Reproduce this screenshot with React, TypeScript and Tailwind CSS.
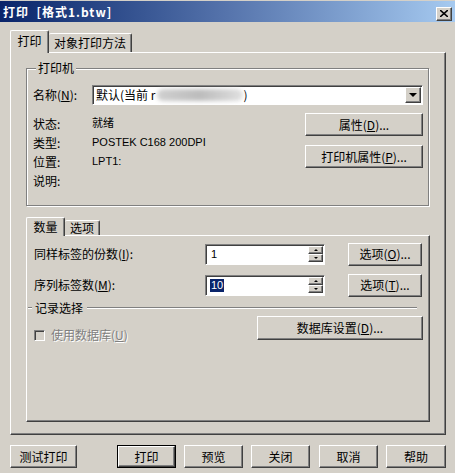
import React from "react";

const raised =
  "border border-t-white border-l-white border-r-[#404040] border-b-[#404040] shadow-[inset_-1px_-1px_0_#808080] bg-[#d4d0c8]";
const sunken =
  "border border-t-[#808080] border-l-[#808080] border-r-white border-b-white shadow-[inset_1px_1px_0_#404040] bg-white";
const cjk = "font-['SimSun','Noto_Sans_CJK_SC',sans-serif]";

const Btn = ({ label, className = "" }: { label: React.ReactNode; className?: string }) => (
  <div
    className={`${raised} flex items-center justify-center text-[12px] leading-none text-black ${className}`}
  >
    {label}
  </div>
);

const U = ({ c }: { c: string }) => <span className="underline underline-offset-1">{c}</span>;

const SpinBox = ({ value, selected }: { value: string; selected?: boolean }) => (
  <div className={`${sunken} w-[120px] h-[21px] flex items-center pl-[4px]`}>
    <span
      className={`text-[11px] leading-[13px] font-['Liberation_Sans',sans-serif] px-[1px] ${
        selected ? "bg-[#0a246a] text-white" : "text-black"
      }`}
    >
      {value}
    </span>
    <div className="ml-auto mr-[1px] flex flex-col gap-0">
      <div className={`${raised} w-[15px] h-[8px] flex items-center justify-center`}>
        <div className="w-0 h-0 border-l-[2px] border-r-[2px] border-b-[2px] border-l-transparent border-r-transparent border-b-black" />
      </div>
      <div className={`${raised} w-[15px] h-[8px] flex items-center justify-center`}>
        <div className="w-0 h-0 border-l-[2px] border-r-[2px] border-t-[2px] border-l-transparent border-r-transparent border-t-black" />
      </div>
    </div>
  </div>
);

const InfoRow = ({ label, value }: { label: string; value?: string }) => (
  <div className="h-[19px] flex items-center">
    <span className="w-[59px] text-[12px] leading-none">{label}</span>
    <span className="text-[11px] leading-none font-['Liberation_Sans','Noto_Sans_CJK_SC',sans-serif]">
      {value}
    </span>
  </div>
);

export default function App() {
  return (
    <div className={`w-[455px] h-[473px] bg-[#d4d0c8] overflow-hidden ${cjk} text-black`}>
      {/* title bar */}
      <div className="h-[21px] mt-[1px] flex items-center bg-gradient-to-r from-[#0a246a] via-[#5674ac] to-[#a6caf0] pl-[3px] pr-[3px]">
        <span className="text-white font-bold text-[12px] leading-none tracking-[1px]">
          打印&nbsp;&nbsp;[格式1.btw]
        </span>
        <div className={`${raised} ml-auto mt-[4px] w-[16px] h-[14px] flex items-center justify-center`}>
          <svg width="8" height="7" viewBox="0 0 8 7">
            <path d="M0 0 L8 7 M8 0 L0 7" stroke="black" strokeWidth="1.6" />
          </svg>
        </div>
      </div>

      {/* main tabs */}
      <div className="mt-[8px] ml-[10px] flex items-end">
        <div className="relative z-10 -mb-px h-[23px] w-[39px] border-t border-l border-r border-t-white border-l-white border-r-[#404040] shadow-[inset_-1px_0_0_#808080] rounded-t-[2px] bg-[#d4d0c8] flex items-start justify-center pt-[4px] text-[12px] leading-none">
          打印
        </div>
        <div className="h-[19px] w-[83px] border-t border-r border-t-white border-r-[#404040] shadow-[inset_-1px_0_0_#808080] rounded-t-[2px] flex items-start justify-center pt-[3px] text-[12px] leading-none">
          对象打印方法
        </div>
      </div>

      {/* main panel */}
      <div className={`${raised} ml-[10px] w-[436px] h-[383px] flex flex-col`}>
        <fieldset className="ml-[15px] mt-[7px] w-[403px] h-[146px] border border-[#808080] shadow-[inset_1px_1px_0_#fff,1px_1px_0_#fff] pl-[6px] pr-[5px] pt-[9px]">
          <legend className="ml-[3px] px-[2px] bg-[#d4d0c8] text-[12px] leading-[16px]">打印机</legend>
          <div className="flex items-center">
            <span className="w-[59px] text-[12px] leading-none">
              名称(<U c="N" />):
            </span>
            <div className={`${sunken} w-[331px] h-[20px] flex items-center pl-[3px]`}>
              <span className="text-[12px] leading-none">默认(当前 r</span>
              <span className="ml-[2px] w-[86px] h-[12px] rounded-full bg-gradient-to-r from-[#d0d0d0] via-[#bcbcbc] to-[#e0e0e0] blur-[2px]" />
              <span className="text-[12px] leading-none">)</span>
              <div className={`${raised} ml-auto mr-[1px] w-[16px] h-[16px] flex items-center justify-center`}>
                <div className="w-0 h-0 border-l-[4px] border-r-[4px] border-t-[4px] border-l-transparent border-r-transparent border-t-black" />
              </div>
            </div>
          </div>
          <div className="flex">
            <div className="pt-[9px] flex flex-col">
              <InfoRow label="状态:" value="就绪" />
              <InfoRow label="类型:" value="POSTEK C168 200DPI" />
              <InfoRow label="位置:" value="LPT1:" />
              <InfoRow label="说明:" />
            </div>
            <div className="ml-auto pt-[8px] flex flex-col gap-[9px]">
              <Btn className="w-[118px] h-[23px]" label={<>属性(<U c="D" />)...</>} />
              <Btn className="w-[118px] h-[23px]" label={<>打印机属性(<U c="P" />)...</>} />
            </div>
          </div>
        </fieldset>

        {/* inner tabs */}
        <div className="mt-[11px] ml-[15px] flex items-end">
          <div className="relative z-10 -mb-px h-[19px] w-[39px] border-t border-l border-r border-t-white border-l-white border-r-[#404040] shadow-[inset_-1px_0_0_#808080] rounded-t-[2px] bg-[#d4d0c8] flex items-start justify-center pt-[3px] text-[12px] leading-none">
            数量
          </div>
          <div className="h-[15px] w-[35px] border-t border-r border-t-white border-r-[#404040] shadow-[inset_-1px_0_0_#808080] rounded-t-[2px] flex items-start justify-center pt-[1px] text-[12px] leading-none">
            选项
          </div>
        </div>
        <div className={`${raised} ml-[15px] w-[404px] h-[187px] flex flex-col pl-[7px] pr-[6px]`}>
          <div className="mt-[6px] h-[24px] flex items-center">
            <span className="w-[171px] text-[12px] leading-none">
              同样标签的份数(<U c="I" />):
            </span>
            <SpinBox value="1" />
            <Btn className="ml-[23px] w-[74px] h-[23px]" label={<>选项(<U c="O" />)...</>} />
          </div>
          <div className="mt-[7px] h-[24px] flex items-center">
            <span className="w-[171px] text-[12px] leading-none">
              序列标签数(<U c="M" />):
            </span>
            <SpinBox value="10" selected />
            <Btn className="ml-[23px] w-[74px] h-[23px]" label={<>选项(<U c="T" />)...</>} />
          </div>
          <div className="mt-[3px] h-[16px] flex items-center -ml-[6px] pr-[6px]">
            <div className="w-[4px] h-[2px] border-t border-t-[#808080] border-b border-b-white" />
            <span className="ml-[3px] text-[12px] leading-none">记录选择</span>
            <div className="ml-[4px] flex-1 h-[2px] border-t border-t-[#808080] border-b border-b-white" />
          </div>
          <div className="flex items-start">
            <div className="mt-[13px] flex items-center">
              <div className="w-[11px] h-[11px] border border-t-[#808080] border-l-[#808080] border-r-white border-b-white shadow-[inset_1px_1px_0_#404040] bg-[#d4d0c8]" />
              <span className="ml-[6px] text-[12px] leading-none text-[#808080] [text-shadow:1px_1px_0_#fff]">
                使用数据库(<U c="U" />)
              </span>
            </div>
            <Btn className="ml-auto w-[166px] h-[24px]" label={<>数据库设置(<U c="D" />)...</>} />
          </div>
        </div>
      </div>

      {/* bottom buttons */}
      <div className="mt-[10px] ml-[10px] flex items-center">
        <Btn className="w-[67px] h-[23px]" label="测试打印" />
        <div className="ml-[40px] border border-black w-[59px] h-[23px] flex">
          <Btn className="flex-1" label="打印" />
        </div>
        <Btn className="ml-[8px] w-[59px] h-[23px]" label="预览" />
        <Btn className="ml-[8px] w-[59px] h-[23px]" label="关闭" />
        <Btn className="ml-[9px] w-[59px] h-[23px]" label="取消" />
        <Btn className="ml-[8px] w-[60px] h-[23px]" label="帮助" />
      </div>
    </div>
  );
}
